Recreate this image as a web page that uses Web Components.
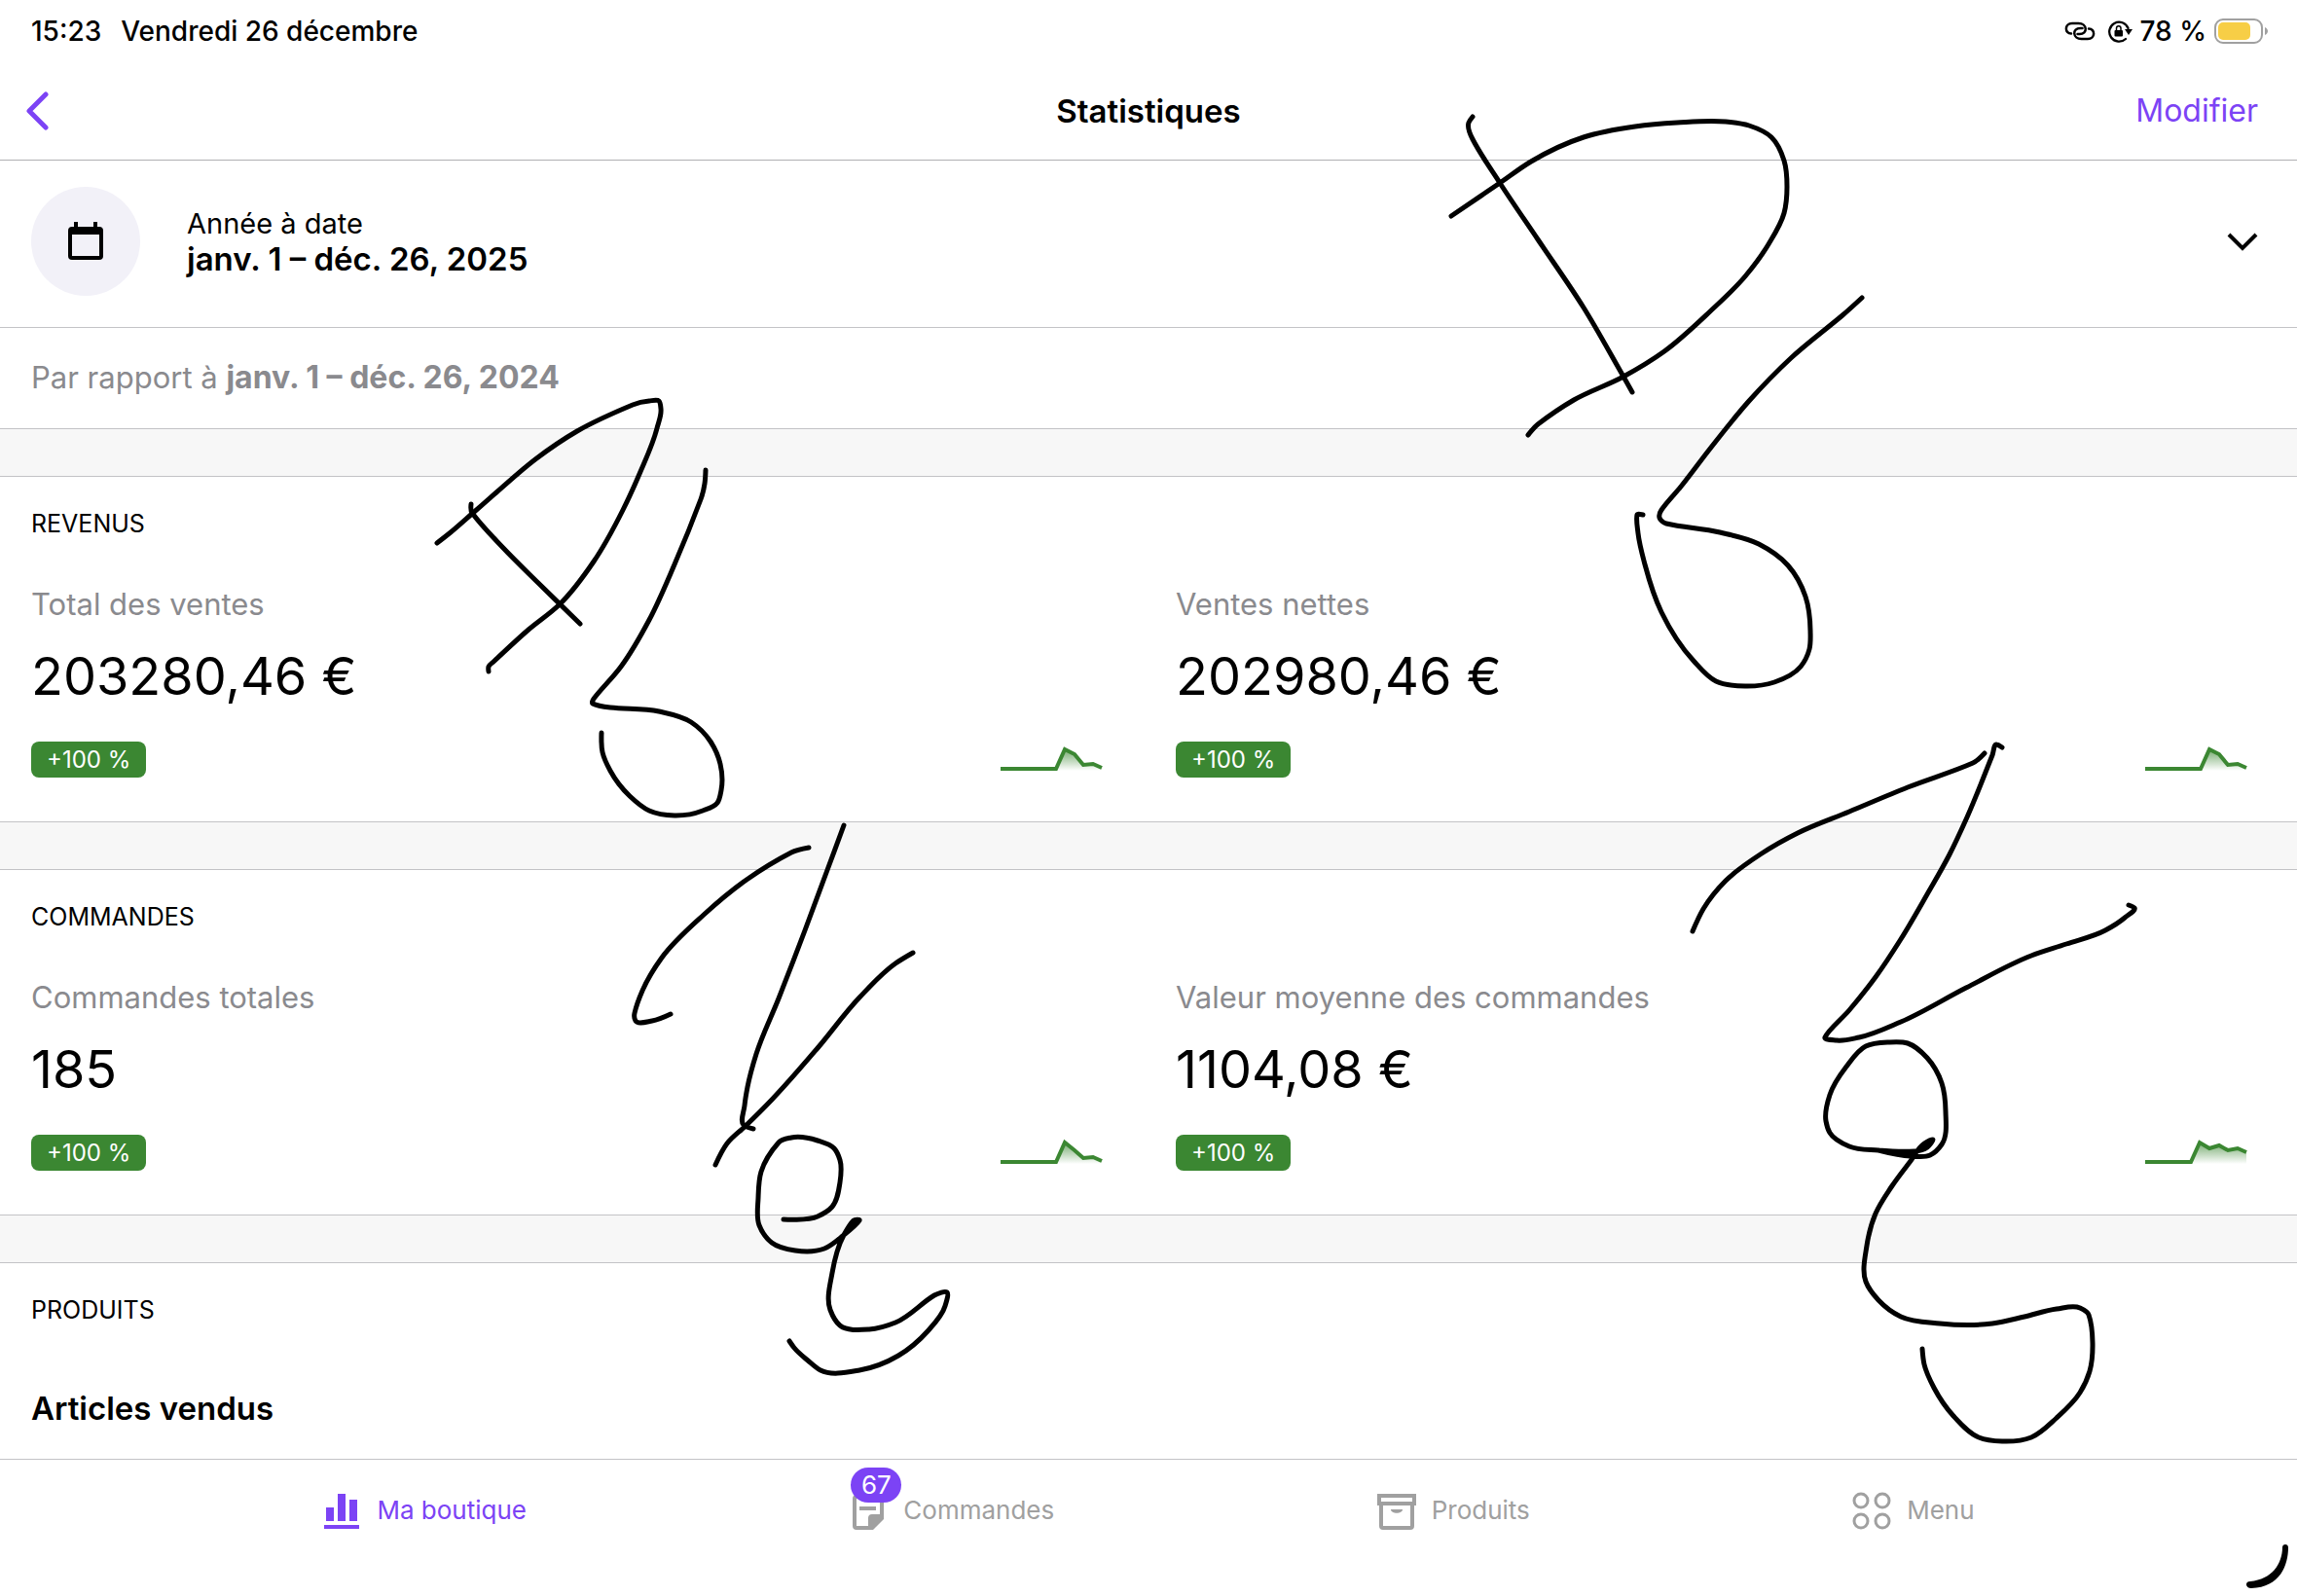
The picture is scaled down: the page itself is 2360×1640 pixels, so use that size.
<!DOCTYPE html>
<html lang="fr">
<head>
<meta charset="utf-8">
<meta name="viewport" content="width=device-width, initial-scale=1">
<title>Statistiques</title>
<style>
  :root {
    --accent: #7c43f5;
    --green: #3b8732;
    --line: #c3c3c6;
    --muted: #8a8a8e;
    --band: #f7f7f7;
  }
  body {
    margin: 0;
    background: #fff;
    color: #000;
    font-family: Inter, "Liberation Sans", sans-serif;
  }
</style>
</head>
<body>
<stats-app></stats-app>

<script>
class StatusBar extends HTMLElement {
  constructor() {
    super();
    this.attachShadow({ mode: 'open' }).innerHTML = `
    <style>
      :host {
        display: flex;
        align-items: center;
        justify-content: space-between;
        height: 64px;
        padding: 0 30px 0 32px;
        font-size: 28px;
        font-weight: 500;
      }
      div { display: flex; align-items: center; }
      .left { gap: 20px; }
      .right { gap: 8px; }
      .link { margin-right: 4px; }
      svg { display: block; }
    </style>
    <div class="left"><span>${this.getAttribute('time')}</span><span>${this.getAttribute('date')}</span></div>
    <div class="right">
      <svg class="link" width="32" height="20" viewBox="0 0 32 20" fill="none" stroke="#000" stroke-width="2.500" stroke-linecap="round">
        <path d="M7 12.500C0 12.500 0 2 8 2h6.500c9 0 10 11 1 11h-2"/>
        <path d="M25 7.500c7 0 7 10.500-1 10.500h-6.500c-9 0-10-11-1-11h2"/>
      </svg>
      <svg width="26" height="24" viewBox="0 0 26 24">
        <path d="M19 20A10 10 0 1 1 21.500 9" fill="none" stroke="#000" stroke-width="2.300" stroke-linecap="round"/>
        <path d="M18 10h8l-4 6z"/>
        <rect x="7.500" y="11" width="8.500" height="6.500" rx="1"/>
        <path d="M9.500 11V9a2.250 2.250 0 0 1 4.500 0v2" fill="none" stroke="#000" stroke-width="1.500"/>
      </svg>
      <span>${this.getAttribute('battery')}</span>
      <svg width="55" height="26" viewBox="0 0 55 26">
        <rect x="1" y="1" width="48" height="24" rx="8" fill="#fff" stroke="#a0a0a0" stroke-width="2"/>
        <rect x="4" y="4" width="33" height="18" rx="5" fill="#f7ce46"/>
        <path d="M52 9c4 2 4 6 0 8z" fill="#a0a0a0"/>
      </svg>
    </div>`;
  }
}

class NavHeader extends HTMLElement {
  constructor() {
    super();
    this.attachShadow({ mode: 'open' }).innerHTML = `
    <style>
      :host {
        display: grid;
        grid-template-columns: 1fr auto 1fr;
        align-items: center;
        height: 100px;
        border-bottom: 1px solid #b0b0b3;
      }
      h1 { margin: 0; font-size: 33px; font-weight: 600; line-height: 40px; }
      button {
        border: 0;
        padding: 0;
        background: none;
        color: var(--accent);
        font: inherit;
        font-size: 32px;
        line-height: 40px;
      }
      .back { justify-self: start; padding-left: 26px; }
      .edit { justify-self: end; padding-right: 40px; }
      svg { display: block; }
    </style>
    <button class="back" aria-label="Retour">
      <svg width="24" height="40" viewBox="0 0 24 40" fill="none" stroke="currentColor" stroke-width="5" stroke-linecap="round" stroke-linejoin="round"><path d="M21 3L4 20l17 17"/></svg>
    </button>
    <h1><slot></slot></h1>
    <button class="edit">Modifier</button>`;
  }
}

class PeriodPicker extends HTMLElement {
  constructor() {
    super();
    this.attachShadow({ mode: 'open' }).innerHTML = `
    <style>
      :host { display: block; border-bottom: 1px solid var(--line); }
      button {
        display: flex;
        align-items: center;
        gap: 48px;
        width: 100%;
        border: 0;
        padding: 27px 40px 32px 32px;
        background: none;
        color: inherit;
        font: inherit;
        text-align: left;
      }
      .round {
        display: grid;
        place-items: center;
        width: 112px;
        height: 112px;
        border-radius: 50%;
        background: #f2f1f8;
      }
      .text { flex: 1; font-size: 29px; line-height: 37px; }
      .text span { display: block; }
      .text .range { font-size: 33px; font-weight: 600; }
      svg { display: block; }
    </style>
    <button>
      <span class="round">
        <svg width="36" height="40" viewBox="0 0 36 40"><path fill-rule="evenodd" d="M6 0h4v5h16V0h4v5h2a4 4 0 0 1 4 4v26a4 4 0 0 1-4 4H4a4 4 0 0 1-4-4V9a4 4 0 0 1 4-4h2zM4 13v22h28V13z"/></svg>
      </span>
      <span class="text"><span><slot name="label"></slot></span><span class="range"><slot name="range"></slot></span></span>
      <svg width="32" height="20" viewBox="0 0 32 20" fill="none" stroke="#000" stroke-width="4"><path d="M2 3l14 14L30 3"/></svg>
    </button>`;
  }
}

class CompareRow extends HTMLElement {
  constructor() {
    super();
    this.attachShadow({ mode: 'open' }).innerHTML = `
    <style>
      :host {
        display: block;
        padding: 31px 32px 32px;
        border-bottom: 1px solid var(--line);
        color: var(--muted);
        font-size: 31px;
        line-height: 40px;
      }
      ::slotted(b) { font-size: 32px; font-weight: 700; }
    </style>
    <slot></slot>`;
  }
}

class StatSection extends HTMLElement {
  constructor() {
    super();
    this.attachShadow({ mode: 'open' }).innerHTML = `
    <style>
      :host {
        display: block;
        margin-top: 48px;
        padding: 32px 32px 45px;
        border-top: 1px solid var(--line);
        border-bottom: 1px solid var(--line);
        background: #fff;
      }
      h2 { margin: 0 0 47px; font-size: 25px; font-weight: 400; line-height: 32px; text-transform: uppercase; }
      .grid { display: grid; grid-template-columns: 1fr 1fr; column-gap: 56px; }
    </style>
    <h2>${this.getAttribute('heading')}</h2>
    <div class="grid"><slot></slot></div>`;
  }
}

class StatCard extends HTMLElement {
  constructor() {
    super();
    const points = this.getAttribute('points');
    this.attachShadow({ mode: 'open' }).innerHTML = `
    <style>
      :host { display: block; }
      .label { color: var(--muted); font-size: 31px; line-height: 40px; }
      .value { margin: 20px 0 33px; font-size: 54px; line-height: 68px; }
      .foot { display: flex; align-items: center; justify-content: space-between; padding-right: 20px; }
      .delta {
        padding: 0 16px;
        border-radius: 8px;
        background: var(--green);
        color: #fff;
        font-size: 24px;
        line-height: 37px;
      }
      svg { display: block; overflow: visible; }
    </style>
    <div class="label">${this.getAttribute('label')}</div>
    <div class="value">${this.getAttribute('value')}</div>
    <div class="foot">
      <span class="delta">${this.getAttribute('delta')}</span>
      <svg width="104" height="29" viewBox="0 0 104 29">
        <defs><linearGradient id="fade" gradientUnits="userSpaceOnUse" x1="0" y1="4" x2="0" y2="26">
          <stop offset="0" stop-color="#3b8732" stop-opacity="0.7"/>
          <stop offset="1" stop-color="#3b8732" stop-opacity="0"/>
        </linearGradient></defs>
        <polygon points="0,26 ${points} 104,26" fill="url(#fade)"/>
        <polyline points="${points}" fill="none" stroke="#3b8732" stroke-width="4"/>
      </svg>
    </div>`;
  }
}

const ICONS = {
  chart: '<path d="M4 17h8v14H4zM16 3h8v28h-8zM28 9h8v22h-8zM2 35h36v4H2z"/>',
  orders: '<path fill-rule="evenodd" d="M8 4h24a4 4 0 0 1 4 4v21L25 40H8a4 4 0 0 1-4-4V8a4 4 0 0 1 4-4zM8 8v28h12V28a4 4 0 0 1 4-4h8V8z"/><path d="M11 16h17v4H11z"/>',
  products: '<path fill-rule="evenodd" d="M0 3h40v12h-2v21a4 4 0 0 1-4 4H6a4 4 0 0 1-4-4V15H0zM4 7v4h32V7zM6 15v21h28V15z"/><path d="M14 19h12c0 5-12 5-12 0z"/>',
  menu: '<g fill="none" stroke="currentColor" stroke-width="3"><circle cx="9" cy="10" r="7"/><circle cx="31" cy="10" r="7"/><circle cx="9" cy="31" r="7"/><circle cx="31" cy="31" r="7"/></g>'
};

class TabItem extends HTMLElement {
  constructor() {
    super();
    const badge = this.getAttribute('badge');
    this.attachShadow({ mode: 'open' }).innerHTML = `
    <style>
      :host { display: block; color: #a0a0a0; }
      :host([active]) { color: var(--accent); }
      a { display: flex; align-items: center; gap: 16px; color: inherit; text-decoration: none; font-size: 26px; line-height: 40px; }
      .icon { position: relative; }
      svg { display: block; fill: currentColor; }
      .badge {
        position: absolute;
        left: 2px;
        bottom: 28px;
        width: 52px;
        border-radius: 18px;
        background: var(--accent);
        color: #fff;
        line-height: 36px;
        text-align: center;
      }
    </style>
    <a href="#">
      <span class="icon">
        <svg width="40" height="40" viewBox="0 0 40 40">${ICONS[this.getAttribute('icon')]}</svg>
        ${badge ? `<span class="badge">${badge}</span>` : ''}
      </span>
      <slot></slot>
    </a>`;
  }
}

class TabBar extends HTMLElement {
  constructor() {
    super();
    this.attachShadow({ mode: 'open' }).innerHTML = `
    <style>
      :host { display: block; border-top: 1px solid var(--line); background: #fff; }
      nav { display: flex; justify-content: space-evenly; padding: 32px 0 68px; }
    </style>
    <nav><slot></slot></nav>`;
  }
}

// Pen strokes, as lists of points that are joined with a smooth curve
const STROKES = [
  '449,558 463,547 486,527 510,506 550,472 593,443 650,416 667,412 677,412 679,420 675,440 657,487 640,524 610,577 575,621 543,647 507,680 502,685 502,690',
  '484,518 485,527 517,563 553,599 596,641',
  '725,483 724,497 720,513 693,580 667,637 638,685 610,718 609,723 627,727 677,731 710,742 730,762 740,785 741,812 737,825 722,833 693,838 667,833 647,818 627,792 619,773 618,753',
  '1491,222 1541,188 1573,166 1627,141 1680,130 1723,126 1773,125 1797,129 1820,141 1833,165 1836,192 1833,219 1817,251 1793,284 1757,320 1710,361 1668,387 1617,411 1580,436 1570,447',
  '1513,120 1509,126 1513,143 1541,188 1580,246 1627,316 1668,387 1677,403',
  '1913,306 1893,324 1840,368 1797,412 1757,461 1727,500 1707,524 1705,532 1712,538 1767,547 1807,559 1837,581 1855,613 1860,648 1859,667 1850,685 1823,701 1793,705 1763,700 1740,679 1707,629 1690,580 1683,548 1682,529 1688,529',
  '831,871 813,876 767,904 723,940 680,984 660,1018 652,1041 653,1049 670,1049 689,1042',
  '867,848 850,894 827,956 800,1026 777,1083 768,1117 765,1136 764,1156 774,1160',
  '938,979 920,990 883,1025 840,1077 793,1130 766,1157 747,1175 735,1197',
  '805,1253 840,1250 855,1240 863,1215 863,1192 857,1180 840,1172 813,1169 800,1174 782,1204 779,1231 780,1259 793,1277 817,1285 847,1283 867,1269 883,1254 877,1254 867,1269 855,1308 853,1346 863,1362 893,1366 920,1359 960,1331 973,1328 971,1342 953,1368 923,1393 883,1408 843,1408 830,1398 816,1385 811,1378',
  '1739,957 1750,934 1773,905 1810,877 1847,856 1900,834 1960,809 2027,784 2039,774',
  '2057,768 2051,765 2047,776 2020,842 2003,878 1980,919 1953,965 1927,1004 1900,1038 1875,1066 1887,1069 1910,1066 1953,1050 2020,1015 2087,982 2123,970 2163,956 2183,943 2193,933 2187,930',
  '1930,1182 1963,1188 1983,1187 1995,1176 1999,1142 1995,1113 1980,1087 1960,1072 1940,1071 1917,1075 1897,1096 1880,1125 1876,1152 1880,1164 1900,1178 1930,1182 1967,1183 1980,1179 1986,1171 1977,1175 1963,1193 1943,1220 1927,1247 1918,1280 1917,1317 1930,1336 1953,1353 1993,1360 2047,1360 2080,1353 2113,1345 2137,1344 2146,1351 2150,1380 2147,1409 2137,1431 2113,1457 2087,1477 2057,1481 2033,1477 2007,1455 1987,1426 1977,1402 1975,1386'
];

class InkLayer extends HTMLElement {
  constructor() {
    super();
    this.attachShadow({ mode: 'open' }).innerHTML = `
    <style>
      :host { position: absolute; inset: 0; pointer-events: none; }
      svg { display: block; width: 100%; height: 100%; }
    </style>
    <svg viewBox="0 0 2360 1640" preserveAspectRatio="none" aria-hidden="true">
      <g fill="none" stroke="#000" stroke-width="5" stroke-linecap="round" stroke-linejoin="round">
        ${STROKES.map((s) => `<path d="${this.smooth(s)}"/>`).join('')}
      </g>
      <path d="M2345 1590C2345 1586 2351 1586 2351 1590C2351 1608 2343 1631 2313 1632C2307 1632 2306 1625 2312 1625C2334 1623 2345 1607 2345 1590z"/>
    </svg>`;
  }

  smooth(list) {
    const p = list.split(' ').map((s) => s.split(',').map(Number));
    const tangents = p.map((b, i) => {
      const a = p[i - 1], c = p[i + 1];
      if (!a || !c) return [0, 0];
      const l1 = Math.hypot(b[0] - a[0], b[1] - a[1]);
      const l2 = Math.hypot(c[0] - b[0], c[1] - b[1]);
      // a very short neighbour marks a sharp turn, there the chord gives the direction
      if (Math.min(l1, l2) / Math.max(l1, l2) < 0.4) {
        return [0, 1].map((k) => (c[k] - a[k]) / (l1 + l2));
      }
      return [0, 1].map((k) => ((b[k] - a[k]) / l1 * l2 + (c[k] - b[k]) / l2 * l1) / (l1 + l2));
    });
    let d = `M${p[0]}`;
    for (let i = 0; i < p.length - 1; i++) {
      const b = p[i], c = p[i + 1], t = tangents[i], u = tangents[i + 1];
      const h = Math.hypot(c[0] - b[0], c[1] - b[1]) / 3;
      d += `C${b[0] + t[0] * h},${b[1] + t[1] * h} ${c[0] - u[0] * h},${c[1] - u[1] * h} ${c}`;
    }
    return d;
  }
}

class StatsApp extends HTMLElement {
  constructor() {
    super();
    this.attachShadow({ mode: 'open' }).innerHTML = `
    <style>
      :host { position: relative; display: flex; flex-direction: column; height: 100vh; overflow: hidden; }
      main { flex: 1; min-height: 0; overflow: hidden; background: var(--band); }
      period-picker, compare-row { background: #fff; }
      h3 { grid-column: 1 / -1; margin: 18px 0 200px; font-size: 33px; font-weight: 600; line-height: 40px; }
    </style>
    <status-bar time="15:23" date="Vendredi 26 décembre" battery="78 %"></status-bar>
    <nav-header>Statistiques</nav-header>
    <main>
      <period-picker><span slot="label">Année à date</span><span slot="range">janv. 1 – déc. 26, 2025</span></period-picker>
      <compare-row>Par rapport à <b>janv. 1 – déc. 26, 2024</b></compare-row>
      <stat-section heading="Revenus">
        <stat-card label="Total des ventes" value="203280,46 €" delta="+100 %" points="0,24 57,24 66,4 76,9 85,20 95,19 104,23"></stat-card>
        <stat-card label="Ventes nettes" value="202980,46 €" delta="+100 %" points="0,24 57,24 66,4 76,9 85,20 95,19 104,23"></stat-card>
      </stat-section>
      <stat-section heading="Commandes">
        <stat-card label="Commandes totales" value="185" delta="+100 %" points="0,24 57,24 66,4 76,12 85,20 95,19 104,23"></stat-card>
        <stat-card label="Valeur moyenne des commandes" value="1104,08 €" delta="+100 %" points="0,24 47,24 56,4 66,10 76,7 85,12 95,10 104,14"></stat-card>
      </stat-section>
      <stat-section heading="Produits"><h3>Articles vendus</h3></stat-section>
    </main>
    <tab-bar>
      <tab-item icon="chart" active>Ma boutique</tab-item>
      <tab-item icon="orders" badge="67">Commandes</tab-item>
      <tab-item icon="products">Produits</tab-item>
      <tab-item icon="menu">Menu</tab-item>
    </tab-bar>
    <ink-layer></ink-layer>`;
  }
}

customElements.define('status-bar', StatusBar);
customElements.define('nav-header', NavHeader);
customElements.define('period-picker', PeriodPicker);
customElements.define('compare-row', CompareRow);
customElements.define('stat-section', StatSection);
customElements.define('stat-card', StatCard);
customElements.define('tab-item', TabItem);
customElements.define('tab-bar', TabBar);
customElements.define('ink-layer', InkLayer);
customElements.define('stats-app', StatsApp);
</script>
</body>
</html>
